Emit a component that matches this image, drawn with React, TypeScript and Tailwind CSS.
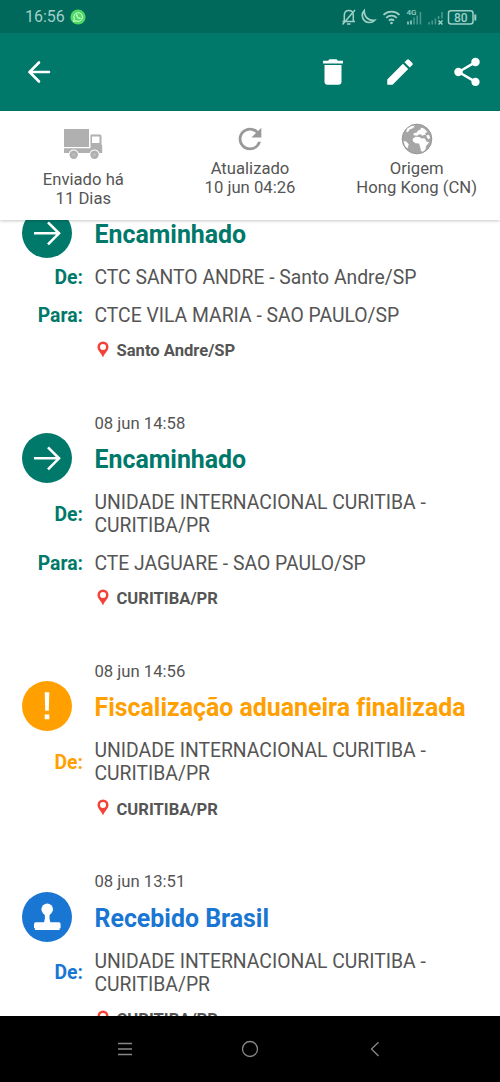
import React from "react";
import { MdDelete, MdEdit, MdShare, MdRefresh } from "react-icons/md";

type Kind = "forward" | "alert" | "stamp";
interface Item {
  kind: Kind;
  date?: string;
  title: string;
  rows: { label: string; lines: string[] }[];
  place: string;
}

const unit = ["UNIDADE INTERNACIONAL CURITIBA -", "CURITIBA/PR"];
const items: Item[] = [
  {
    kind: "forward",
    title: "Encaminhado",
    rows: [
      { label: "De:", lines: ["CTC SANTO ANDRE - Santo Andre/SP"] },
      { label: "Para:", lines: ["CTCE VILA MARIA - SAO PAULO/SP"] },
    ],
    place: "Santo Andre/SP",
  },
  {
    kind: "forward",
    date: "08 jun 14:58",
    title: "Encaminhado",
    rows: [
      { label: "De:", lines: unit },
      { label: "Para:", lines: ["CTE JAGUARE - SAO PAULO/SP"] },
    ],
    place: "CURITIBA/PR",
  },
  {
    kind: "alert",
    date: "08 jun 14:56",
    title: "Fiscalização aduaneira finalizada",
    rows: [{ label: "De:", lines: unit }],
    place: "CURITIBA/PR",
  },
  {
    kind: "stamp",
    date: "08 jun 13:51",
    title: "Recebido Brasil",
    rows: [{ label: "De:", lines: unit }],
    place: "CURITIBA/PR",
  },
];

const textColor: Record<Kind, string> = {
  forward: "text-[#00796b]",
  alert: "text-[#ffa000]",
  stamp: "text-[#1976d2]",
};

function Badge({ kind }: { kind: Kind }) {
  return (
    <svg viewBox="0 0 50 50" className={`h-[50px] w-[50px] shrink-0 ${textColor[kind]}`}>
      <circle cx="25" cy="25" r="25" fill="currentColor" />
      {kind === "forward" && (
        <path d="M12 25.300h25M26 14.300l11 11-11 11" fill="none" stroke="#fff" strokeWidth="2.600" />
      )}
      {kind === "alert" && <path d="M22.700 11.300h4.600l-.5 18.500h-3.600zM22.700 33.500h4.600v4.700h-4.600z" fill="#fff" />}
      {kind === "stamp" && (
        <g fill="#fff">
          <circle cx="25.200" cy="17.300" r="5.800" />
          <path d="M22.300 21.500h5.800c-1 2.500-.8 6 .3 8.800h8.400a1.800 1.800 0 0 1 1.800 1.800v4.200h-1v1.800H13v-1.800h-1v-4.200a1.800 1.800 0 0 1 1.800-1.800H22c1.100-2.800 1.300-6.300.3-8.800z" />
        </g>
      )}
    </svg>
  );
}

function Pin() {
  return (
    <svg viewBox="0 0 12 17" className="-mt-0.5 h-[17px] w-3 shrink-0">
      <path
        d="M6 .5A5.500 5.500 0 0 0 .5 6c0 3.800 4 6.200 5.500 10.500C7.500 12.200 11.500 9.800 11.500 6A5.500 5.500 0 0 0 6 .5zm0 2.500a3 3 0 1 1 0 6 3 3 0 0 1 0-6z"
        fill="#f44336"
      />
    </svg>
  );
}

function Event({ item }: { item: Item }) {
  const color = textColor[item.kind];
  return (
    <article className="shrink-0 pb-[52.800px]">
      {item.date && <div className="h-5 pt-[0.500px] pl-[94.500px] text-[16.670px] leading-5">{item.date}</div>}
      <div className="flex h-[50px] items-center pl-[22px]">
        <Badge kind={item.kind} />
        <h2 className={`ml-[22.500px] pt-[3px] text-[24.900px] leading-[29px] font-bold ${color}`}>{item.title}</h2>
      </div>
      <div className="mt-[9.300px] flex flex-col gap-[14.700px]">
        {item.rows.map((row) => (
          <div key={row.label} className="flex items-center text-[19.330px] leading-[22.800px]">
            <span className={`w-[83px] text-right font-bold ${color}`}>{row.label}</span>
            <div className="ml-[11.500px]">
              {row.lines.map((line) => (
                <div key={line}>{line}</div>
              ))}
            </div>
          </div>
        ))}
      </div>
      <div className="mt-[12.800px] flex h-5 items-center pl-[96.500px] text-[16.600px] leading-5 font-bold">
        <Pin />
        <span className="ml-2 pt-0.5">{item.place}</span>
      </div>
    </article>
  );
}

function StatusBar() {
  return (
    <div className="flex h-[33px] shrink-0 items-center bg-[#00695c] pl-[25px] text-[#9fd0c7]">
      <span className="w-[38.500px] pt-px text-[16px]">16:56</span>
      <svg viewBox="0 0 16 16" className="ml-1.5 h-4 w-4">
        <circle cx="8" cy="8" r="7.600" fill="#4fd964" />
        <path d="M3.500 12.500l.8-2.500a4.300 4.300 0 1 1 1.700 1.800z" fill="none" stroke="#d9ffdf" strokeWidth="1" />
        <path d="M6 5.500c0 2.500 2 4.500 4.400 4.600l.4-1.200-1.300-.7-.6.600C8 8.400 7.500 7.800 7.200 7.100l.6-.6-.6-1.200z" fill="#d9ffdf" />
      </svg>
      <svg viewBox="0 0 140 24" className="ml-[253.500px] h-6 w-[140px]" fill="none" stroke="#9fd0c7" strokeWidth="1.500">
        <path d="M3.500 16.500h12.500M5.300 16V10.500c0-3.200 2-5 4.500-5s4.500 1.800 4.500 5V16M8 19h3.500M3.500 19.500L16 5" />
        <path d="M25.200 5.500a7 7 0 1 0 10.300 9.800c-5.500.8-10.300-3-10.300-9.800z" strokeWidth="1.700" />
        <path d="M44.500 9.800c4.500-4.300 11.500-4.300 16 0M47.200 12.800c3-2.900 7.600-2.900 10.600 0M49.900 15.600c1.500-1.300 3.700-1.300 5.200 0" strokeWidth="1.800" />
        <circle cx="52.500" cy="18" r="1.300" fill="#9fd0c7" stroke="none" />
        <text x="67.500" y="9.500" fontSize="8" fontWeight="500" fill="#9fd0c7" stroke="none">4G</text>
        <path d="M69 19.500v-3M72 19.500v-4" strokeWidth="1.600" />
        <path d="M75 19.500v-7M78.200 19.500v-9M81.400 19.500V7M90 19.500v-2.500M93.200 19.500v-4M96.400 19.500v-6M99.600 14v-3M103 13.500V7" strokeWidth="1.600" opacity=".45" />
        <path d="M99.500 15.500l4 4M103.500 15.500l-4 4" strokeWidth="1.500" />
        <rect x="109.500" y="5.700" width="24.500" height="13.300" rx="2.500" />
        <path d="M136.300 9.500v6" strokeWidth="2" />
        <text x="121.700" y="16.600" textAnchor="middle" fontSize="12" fontWeight="500" fill="#9fd0c7" stroke="none">80</text>
      </svg>
    </div>
  );
}

function Truck() {
  return (
    <svg viewBox="0 0 40 32" className="h-8 w-10" fill="#b0b0b0">
      <path d="M1 1h25v18H1zM27.500 6.500H37a1.500 1.500 0 0 1 1.500 1.500v8.500l.7 1v7.500h-2.900a5 5 0 0 0-9.600 0H15.500a5 5 0 0 0-9.600 0H1v-4.700h26.500zM29 8.500v6.500h7.500V8.500z" fillRule="evenodd" />
      <circle cx="10.700" cy="26.700" r="4.200" />
      <circle cx="31.500" cy="26.700" r="4.200" />
      <circle cx="10.700" cy="26.700" r="1.600" fill="#bdbdbd" />
      <circle cx="31.500" cy="26.700" r="1.600" fill="#bdbdbd" />
    </svg>
  );
}

function Globe() {
  return (
    <svg viewBox="0 0 32 32" className="h-8 w-8">
      <circle cx="16" cy="16" r="14.800" fill="#a6a6a6" stroke="#959595" strokeWidth="1" />
      <path
        d="M11.500 16l3-2.300 4.200.3 1.200 1.200 4 .2 1.800 3.300 2.500.3-3.200 4.200-.6 3.500-2.600 2-1.800-.6-.9-4.300-1-3.200-3.400-.3-2.600-1.900zM12.500 12.300l.3-2.200 2.700-.4 1.600-2.200 2.200-.7.8-2 2.800.8 3.600 3.500-2.400 1 .7 1.600-2.300.2-1.200 1-1.500-1.600-2 .2-1.600 1.200zM6 5.700l4-2.500 4-.6-2 2.600-3.200 1-1.600 2.500-2 .5zM25 12.500l3-.8 1.200 3.300-2 1.200zM2.500 18l2.700.6 2.600 2.600-1.300 4.300L4 23z"
        fill="#fff"
      />
    </svg>
  );
}

function Info({ icon, lines }: { icon: React.ReactNode; lines: string[] }) {
  return (
    <div className="flex flex-1 flex-col items-center text-[16.670px] leading-[19.500px]">
      {icon}
      {lines.map((line) => (
        <div key={line}>{line}</div>
      ))}
    </div>
  );
}

export default function App() {
  return (
    <div className="flex h-[1082px] w-[500px] flex-col overflow-hidden bg-white font-[Roboto,sans-serif] whitespace-nowrap text-[#555] [font-variant-ligatures:none]">
      <StatusBar />
      <header className="flex h-[78px] shrink-0 items-center bg-[#00796b] pl-[27px] text-white">
        <svg viewBox="0 0 24 24" className="h-6 w-6" fill="none" stroke="currentColor" strokeWidth="2.600" strokeLinecap="round">
          <path d="M22 12H2.500M12 2.500L2.500 12l9.500 9.500" />
        </svg>
        <MdDelete className="ml-[265px] h-[34px] w-[34px]" />
        <MdEdit className="ml-[33px] h-[34px] w-[34px]" />
        <MdShare className="ml-[33px] h-[34px] w-[34px]" />
      </header>
      <section className="z-10 flex h-[108.500px] shrink-0 bg-white shadow-[0_1px_3px_rgba(0,0,0,0.220)]">
        <Info icon={<div className="mt-[17px] mb-[9.500px]"><Truck /></div>} lines={["Enviado há", "11 Dias"]} />
        <Info icon={<MdRefresh className="mt-[10.500px] mb-[3px] h-[34px] w-[34px] text-[#999]" />} lines={["Atualizado", "10 jun 04:26"]} />
        <Info icon={<div className="mt-[12px] mb-[3.500px]"><Globe /></div>} lines={["Origem", "Hong Kong (CN)"]} />
      </section>
      <main className="flex min-h-0 flex-1 flex-col overflow-hidden">
        <div className="-mt-[11.500px] flex shrink-0 flex-col">
          {items.map((item, i) => (
            <Event key={i} item={item} />
          ))}
        </div>
      </main>
      <nav className="flex h-[66.500px] shrink-0 items-center bg-black">
        <svg viewBox="0 0 500 24" className="h-6 w-[500px]" fill="none" stroke="#888" strokeWidth="1.300">
          <path d="M118 6.500h14M118 12h14M118 17.500h14M378.500 5.200L371.500 12l7 7" />
          <circle cx="250" cy="12" r="7.500" />
        </svg>
      </nav>
    </div>
  );
}
